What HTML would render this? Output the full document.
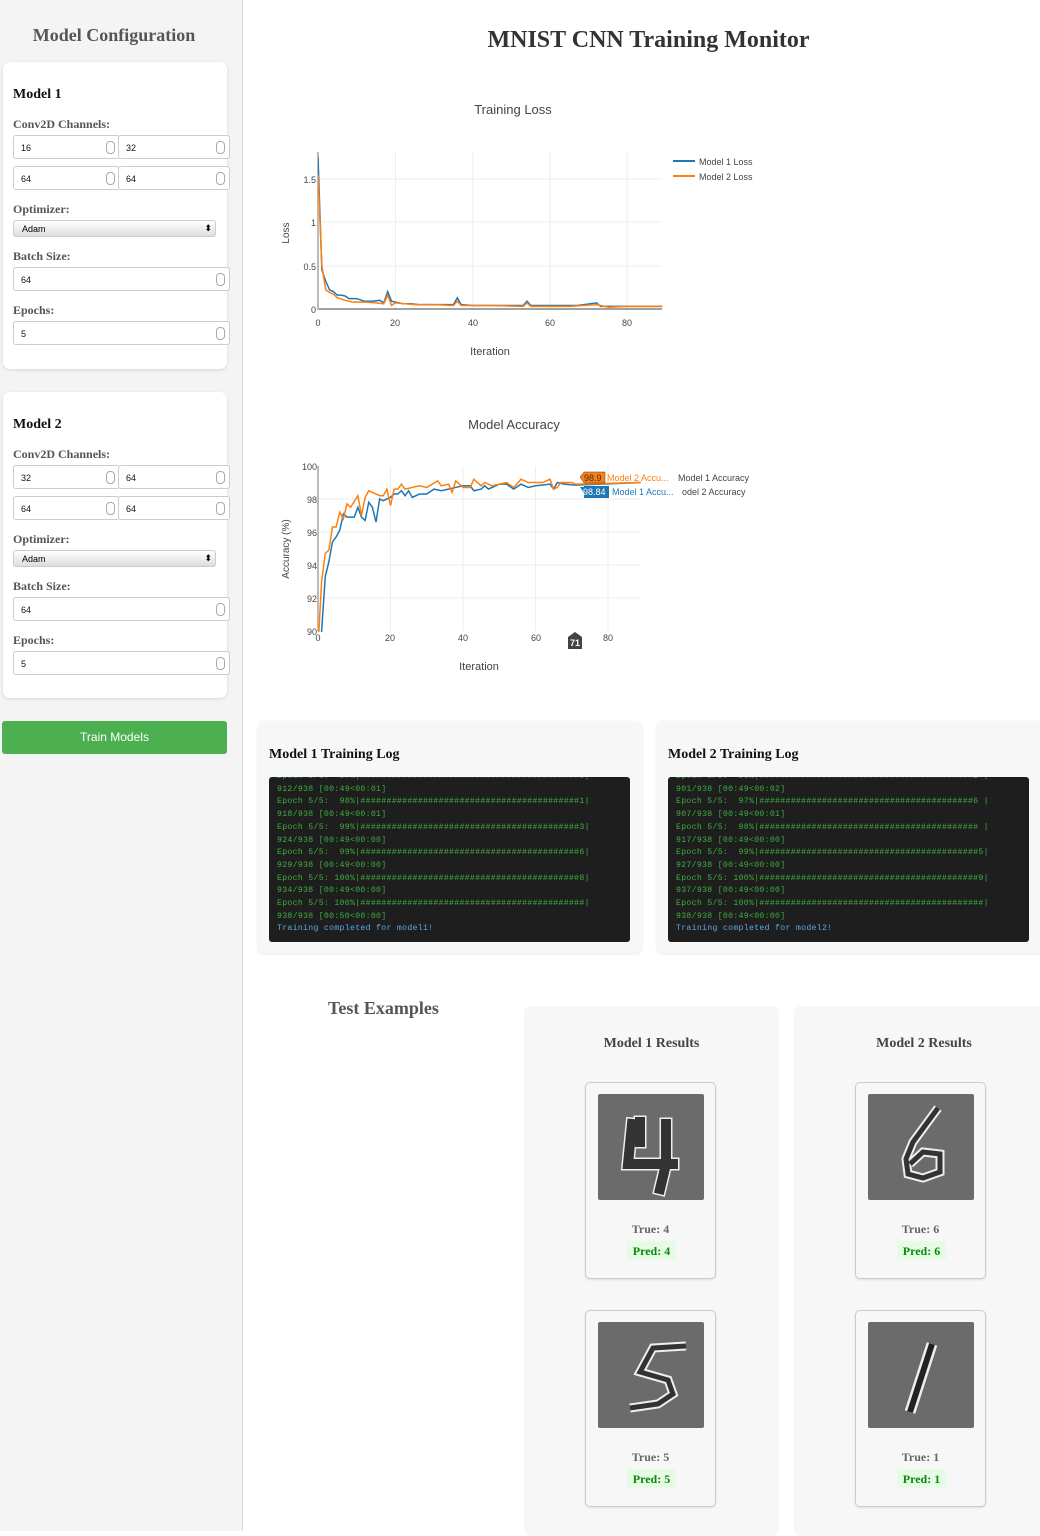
<!DOCTYPE html>
<html><head><meta charset="utf-8"><style>
*{box-sizing:border-box;margin:0;padding:0}
body{width:1040px;height:1531px;overflow:hidden;background:#fff;font-family:"Liberation Serif",serif;position:relative}
.side{position:absolute;left:0;top:0;width:243px;height:1531px;background:#f4f4f4;border-right:1px solid #ddd}
.abs{position:absolute}
.h{font-weight:bold;color:#555}
.card{position:absolute;left:3px;width:224px;background:#fff;border-radius:7px;box-shadow:0 1px 3px rgba(0,0,0,.12)}
.lbl{position:absolute;left:13px;font-size:12px;font-weight:bold;color:#555}
.inp{position:absolute;height:24px;background:#fff;border:1px solid #ccc;border-radius:3px;font:9px "Liberation Sans",sans-serif;color:#111;padding:7px 0 0 7px}
.inp:after{content:"";position:absolute;right:4px;top:5px;width:7px;height:11px;border:1px solid #aaa;border-radius:4px}
.sel{position:absolute;left:13px;width:203px;height:17px;border:1px solid #ccc;border-radius:3px;background:linear-gradient(#fff,#ddd);font:9px "Liberation Sans",sans-serif;padding:3px 0 0 8px}
.sel:after{content:"⬍";position:absolute;right:3px;top:2px;font-size:9px}
.sans{font-family:"Liberation Sans",sans-serif}
.logc{position:absolute;top:721px;height:232px;background:#f7f7f7;border-radius:7px;box-shadow:0 1px 3px rgba(0,0,0,.1)}
.logc h3{position:absolute;left:11px;top:26px;font-size:14px;color:#111}
.log{position:absolute;left:11px;top:56px;width:361px;height:165px;background:#1e1e1e;border-radius:3px;overflow:hidden;font:8.2px "Liberation Mono",monospace;color:#3fae3f;padding:0 0 0 8px;line-height:12.7px;white-space:pre;letter-spacing:.3px}
.log .in{margin-top:-6px}
.log .b{color:#5aa8e8}
.res{position:absolute;top:1006px;height:530px;background:#f7f7f7;border-radius:7px}
.res h3{position:absolute;top:30px;width:100%;text-align:center;font-size:14px;color:#444}
.ex{position:absolute;left:61px;width:131px;height:197px;border:1px solid #ccc;border-radius:5px;background:#f7f7f7;box-shadow:0 1px 2px rgba(0,0,0,.1)}
.ex svg{position:absolute;left:12px;top:11px}
.t{position:absolute;top:139px;width:100%;text-align:center;font-size:12px;font-weight:bold;color:#666}
.p{position:absolute;top:158px;left:41px;width:49px;height:19px;background:#e6fbe6;text-align:center;font-size:12px;font-weight:bold;color:#0a8a0a;padding-top:3px;border-radius:2px}
</style></head><body>
<div class="side">
<div class="abs h" style="left:0;width:228px;top:25px;text-align:center;font-size:18px">Model Configuration</div>
<div class="card" style="top:62px;height:307px">
</div>
<div class="abs" style="left:13px;top:87px;font-size:14px;font-weight:bold;color:#111">Model 1</div>
<div class="lbl" style="top:117px">Conv2D Channels:</div>
<div class="inp" style="left:13px;top:135px;width:107px">16</div>
<div class="inp" style="left:118px;top:135px;width:112px">32</div>
<div class="inp" style="left:13px;top:166px;width:107px">64</div>
<div class="inp" style="left:118px;top:166px;width:112px">64</div>
<div class="lbl" style="top:202px">Optimizer:</div>
<div class="sel" style="top:220px">Adam</div>
<div class="lbl" style="top:249px">Batch Size:</div>
<div class="inp" style="left:13px;top:267px;width:217px">64</div>
<div class="lbl" style="top:303px">Epochs:</div>
<div class="inp" style="left:13px;top:321px;width:217px">5</div>

<div class="card" style="top:392px;height:306px"></div>
<div class="abs" style="left:13px;top:417px;font-size:14px;font-weight:bold;color:#111">Model 2</div>
<div class="lbl" style="top:447px">Conv2D Channels:</div>
<div class="inp" style="left:13px;top:465px;width:107px">32</div>
<div class="inp" style="left:118px;top:465px;width:112px">64</div>
<div class="inp" style="left:13px;top:496px;width:107px">64</div>
<div class="inp" style="left:118px;top:496px;width:112px">64</div>
<div class="lbl" style="top:532px">Optimizer:</div>
<div class="sel" style="top:550px">Adam</div>
<div class="lbl" style="top:579px">Batch Size:</div>
<div class="inp" style="left:13px;top:597px;width:217px">64</div>
<div class="lbl" style="top:633px">Epochs:</div>
<div class="inp" style="left:13px;top:651px;width:217px">5</div>
<div class="abs sans" style="left:2px;top:721px;width:225px;height:33px;background:#4caf50;border-radius:3px;color:#fff;font-size:12px;text-align:center;line-height:33px">Train Models</div>
</div>

<div class="abs" style="left:250px;width:797px;top:27px;text-align:center;font-size:24px;font-weight:bold;color:#333">MNIST CNN Training Monitor</div>

<svg class="abs" style="left:0;top:0" width="1040" height="700" font-family="Liberation Sans, sans-serif">
<defs><clipPath id="c1"><rect x="318" y="140" width="345" height="172"/></clipPath><clipPath id="c2"><rect x="318" y="460" width="323" height="172"/></clipPath></defs>
<text x="513" y="114" font-size="13" text-anchor="middle" fill="#444">Training Loss</text>
<g stroke="#eee" stroke-width="1">
<line x1="395.4" y1="152" x2="395.4" y2="310"/><line x1="472.8" y1="152" x2="472.8" y2="310"/><line x1="550" y1="152" x2="550" y2="310"/><line x1="627" y1="152" x2="627" y2="310"/>
<line x1="318" y1="179" x2="662" y2="179"/><line x1="318" y1="222" x2="662" y2="222"/><line x1="318" y1="266" x2="662" y2="266"/>
</g>
<line x1="318" y1="309" x2="662" y2="309" stroke="#444"/>
<line x1="318" y1="152" x2="318" y2="310" stroke="#bbb" stroke-width="2"/>
<g font-size="9" fill="#444" text-anchor="end"><text x="316" y="183">1.5</text><text x="316" y="226">1</text><text x="316" y="270">0.5</text><text x="316" y="313">0</text></g>
<g font-size="9" fill="#444" text-anchor="middle"><text x="318" y="326">0</text><text x="395" y="326">20</text><text x="473" y="326">40</text><text x="550" y="326">60</text><text x="627" y="326">80</text></g>
<text x="490" y="355" font-size="11" text-anchor="middle" fill="#444">Iteration</text>
<text transform="translate(289,233) rotate(-90)" font-size="10" text-anchor="middle" fill="#444">Loss</text>
<g clip-path="url(#c1)" fill="none" stroke-width="1.5">
<polyline transform="translate(318,309) scale(3.87,-86.7)" vector-effect="non-scaling-stroke" stroke="#1f77b4" points="0,1.75 1,0.45 2,0.32 3,0.22 4,0.2 5,0.16 6,0.16 7,0.15 8,0.12 10,0.12 12,0.09 14,0.09 16,0.1 17,0.07 18,0.2 19,0.09 22,0.06 24,0.06 26,0.05 30,0.05 35,0.05 36,0.13 37,0.05 40,0.04 45,0.04 53,0.04 54,0.09 55,0.04 60,0.04 67,0.04 72,0.07 73,0.03 80,0.03 89,0.03"/>
<polyline transform="translate(318,309) scale(3.87,-86.7)" vector-effect="non-scaling-stroke" stroke="#ff7f0e" points="0,1.55 1,0.5 2,0.22 3,0.19 4,0.17 5,0.13 7,0.1 9,0.08 12,0.08 15,0.07 17,0.06 18,0.16 19,0.04 20,0.07 25,0.05 30,0.05 35,0.04 36,0.09 37,0.04 45,0.04 53,0.03 54,0.07 55,0.03 65,0.03 72,0.05 75,0.02 80,0.03 89,0.03"/>
</g>
<line x1="673" y1="161" x2="695" y2="161" stroke="#1f77b4" stroke-width="2"/><text x="699" y="165" font-size="9" fill="#444">Model 1 Loss</text>
<line x1="673" y1="176" x2="695" y2="176" stroke="#ff7f0e" stroke-width="2"/><text x="699" y="180" font-size="9" fill="#444">Model 2 Loss</text>

<text x="514" y="429" font-size="13" text-anchor="middle" fill="#444">Model Accuracy</text>
<g stroke="#eee" stroke-width="1">
<line x1="390.5" y1="466" x2="390.5" y2="631"/><line x1="463" y1="466" x2="463" y2="631"/><line x1="535.5" y1="466" x2="535.5" y2="631"/><line x1="608" y1="466" x2="608" y2="631"/>
<line x1="318" y1="499" x2="640" y2="499"/><line x1="318" y1="532" x2="640" y2="532"/><line x1="318" y1="565" x2="640" y2="565"/><line x1="318" y1="598" x2="640" y2="598"/>
</g>
<line x1="318" y1="466" x2="318" y2="631" stroke="#bbb" stroke-width="2"/>
<g font-size="9" fill="#444" text-anchor="end"><text x="317" y="470">100</text><text x="317" y="503">98</text><text x="317" y="536">96</text><text x="317" y="569">94</text><text x="317" y="602">92</text><text x="317" y="635">90</text></g>
<g font-size="9" fill="#444" text-anchor="middle"><text x="318" y="641">0</text><text x="390" y="641">20</text><text x="463" y="641">40</text><text x="536" y="641">60</text><text x="608" y="641">80</text></g>
<text x="479" y="670" font-size="11" text-anchor="middle" fill="#444">Iteration</text>
<text transform="translate(289,549) rotate(-90)" font-size="10" text-anchor="middle" fill="#444">Accuracy (%)</text>
<g clip-path="url(#c2)" fill="none" stroke-width="1.5">
<polyline transform="translate(318,2116) scale(3.625,-16.5)" vector-effect="non-scaling-stroke" stroke="#1f77b4" points="0,88 1,90 2,93.3 3,94.2 4,95.4 5,95.7 6,96.1 7,97.1 8,96.9 10,96.9 11,97.5 12,96.9 13,96.7 14,97.8 15,97.5 16,96.6 17,98 18,97.9 20,98.1 21,98.3 22,98.3 23,98.5 24,98.2 25,98.5 26,98.1 28,98.3 30,98.3 32,98.6 34,98.5 36,98.6 38,98.7 40,98.8 42,98.8 43,98.5 45,98.6 46,98.8 47,98.6 50,98.9 52,98.9 54,98.6 56,98.9 58,98.7 60,98.8 64,98.9 65,98.6 66,99.0 68,98.9 71,98.84 89,99"/>
<polyline transform="translate(318,2116) scale(3.625,-16.5)" vector-effect="non-scaling-stroke" stroke="#ff7f0e" points="0,89 1,93 2,94.7 3,94.9 4,96.3 5,96.3 6,97.2 7,96.8 8,97.7 9,97.5 11,98.2 12,97 13,98.1 14,98.5 17,98.2 18,98.2 19,98.6 20,97.6 21,98.6 22,98.6 23,98.9 24,98.6 26,98.7 28,98.8 30,98.7 33,99.1 34,98.8 36,98.9 37,98.4 38,99.1 40,98.7 42,98.7 43,99.2 45,98.8 46,99 48,98.8 50,98.9 52,99 54,98.7 56,99.2 58,99 62,99 64,99.2 65,98.6 66,98.7 67,99 70,99 71,98.9 89,99"/>
</g>
<path d="M580 477 l4 -5 h21 v11 h-21 z" fill="#ff7f0e" stroke="#444" stroke-width=".5"/><text x="584" y="481" font-size="9" fill="#333">98.9</text>
<text x="607" y="481" font-size="9" fill="#ff7f0e">Model 2 Accu...</text>
<path d="M580 487 l4 0 v-1 h25 v12 h-25 v-5 z" fill="#1f77b4"/><text x="583" y="495" font-size="9" fill="#fff">98.84</text>
<text x="612" y="495" font-size="9" fill="#1f77b4">Model 1 Accu...</text>
<text x="678" y="481" font-size="9" fill="#444">Model 1 Accuracy</text>
<text x="682" y="495" font-size="9" fill="#444">odel 2 Accuracy</text>
<path d="M568 637 l7 -5 l7 5 v12 h-14 z" fill="#444"/><text x="575" y="646" font-size="9" fill="#fff" text-anchor="middle" font-weight="bold">71</text>
</svg>

<div class="logc" style="left:258px;width:384px"><h3>Model 1 Training Log</h3>
<div class="log"><div class="in">Epoch 5/5:  97%|##########################################0|
912/938 [00:49&lt;00:01]
Epoch 5/5:  98%|##########################################1|
918/938 [00:49&lt;00:01]
Epoch 5/5:  99%|##########################################3|
924/938 [00:49&lt;00:00]
Epoch 5/5:  99%|##########################################6|
929/938 [00:49&lt;00:00]
Epoch 5/5: 100%|##########################################8|
934/938 [00:49&lt;00:00]
Epoch 5/5: 100%|###########################################|
938/938 [00:50&lt;00:00]
<span class="b">Training completed for model1!</span></div></div></div>
<div class="logc" style="left:657px;width:390px"><h3>Model 2 Training Log</h3>
<div class="log"><div class="in">Epoch 5/5:  96%|#########################################2 |
901/938 [00:49&lt;00:02]
Epoch 5/5:  97%|#########################################6 |
907/938 [00:49&lt;00:01]
Epoch 5/5:  98%|########################################## |
917/938 [00:49&lt;00:00]
Epoch 5/5:  99%|##########################################5|
927/938 [00:49&lt;00:00]
Epoch 5/5: 100%|##########################################9|
937/938 [00:49&lt;00:00]
Epoch 5/5: 100%|###########################################|
938/938 [00:49&lt;00:00]
<span class="b">Training completed for model2!</span></div></div></div>

<div class="abs h" style="left:328px;top:998px;font-size:18px">Test Examples</div>

<div class="res" style="left:524px;width:255px"><h3>Model 1 Results</h3>
<div class="ex" style="top:76px"><svg width="106" height="106"><rect width="106" height="106" fill="#6b6b6b" rx="2"/><g fill="none" stroke-linecap="square"><path d="M34 30 L30 70 L75 70 M42 28 L42 48 M68 30 L68 70 L62 95" stroke="#eee" stroke-width="13"/><path d="M34 30 L30 70 L75 70 M42 28 L42 48 M68 30 L68 70 L62 95" stroke="#333" stroke-width="10"/></g></svg>
<div class="t">True: 4</div><div class="p">Pred: 4</div></div>
<div class="ex" style="top:304px"><svg width="106" height="106"><rect width="106" height="106" fill="#6b6b6b" rx="2"/><g fill="none"><path d="M88 24 L55 26 L42 50 L70 58 L75 72 L60 82 L32 86" stroke="#eee" stroke-width="9"/><path d="M88 24 L55 26 L42 50 L70 58 L75 72 L60 82 L32 86" stroke="#333" stroke-width="5"/></g></svg>
<div class="t">True: 5</div><div class="p">Pred: 5</div></div>
</div>
<div class="res" style="left:794px;width:260px"><h3>Model 2 Results</h3>
<div class="ex" style="top:76px"><svg width="106" height="106"><rect width="106" height="106" fill="#6b6b6b" rx="2"/><g fill="none"><path d="M70 14 L45 48 L38 65 L40 80 L55 84 L72 78 L72 60 L55 58 L42 70" stroke="#eee" stroke-width="9"/><path d="M70 14 L45 48 L38 65 L40 80 L55 84 L72 78 L72 60 L55 58 L42 70" stroke="#333" stroke-width="5"/></g></svg>
<div class="t">True: 6</div><div class="p">Pred: 6</div></div>
<div class="ex" style="top:304px"><svg width="106" height="106"><rect width="106" height="106" fill="#6b6b6b" rx="2"/><g fill="none"><path d="M64 22 L42 90" stroke="#eee" stroke-width="11"/><path d="M64 22 L42 90" stroke="#222" stroke-width="6"/></g></svg>
<div class="t">True: 1</div><div class="p">Pred: 1</div></div>
</div>
</body></html>
